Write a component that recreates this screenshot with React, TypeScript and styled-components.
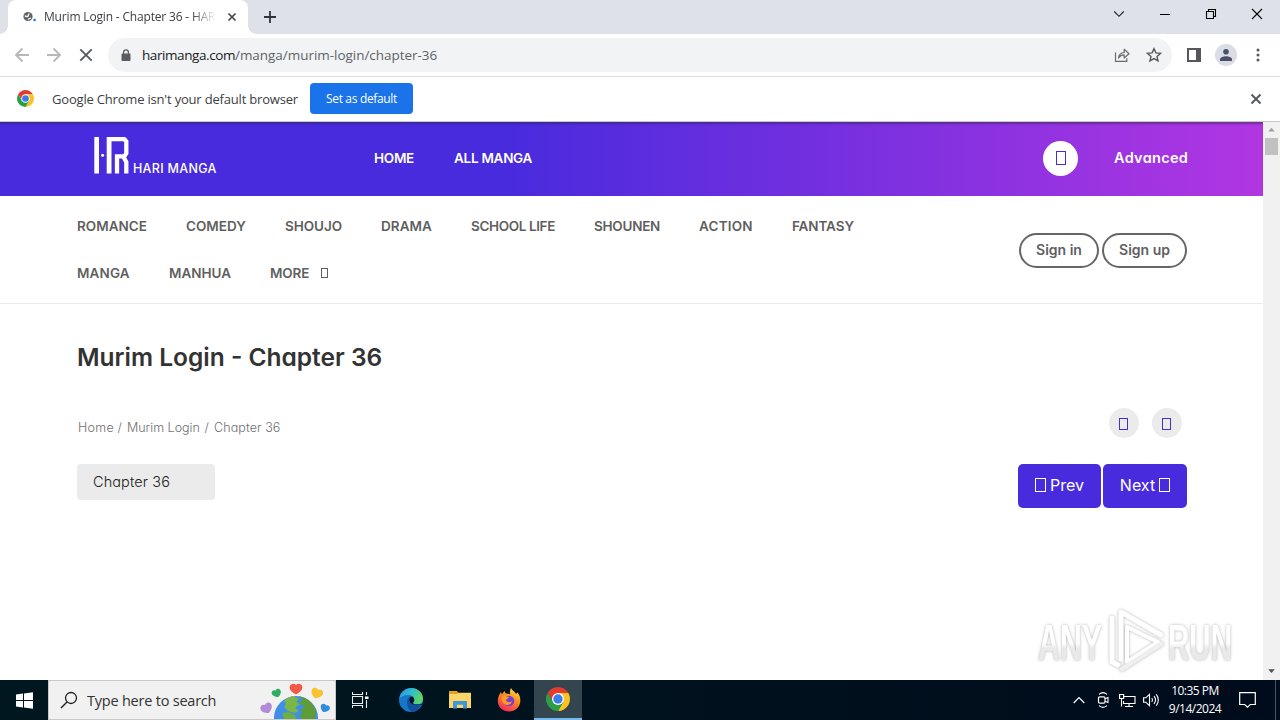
import styled, { createGlobalStyle } from "styled-components"

const categories = [
  [
    { label: "ROMANCE", spacing: 0, width: 70 },
    { label: "COMEDY", spacing: 0, width: 60 },
    { label: "SHOUJO", spacing: -0.05, width: 57 },
    { label: "DRAMA", spacing: 0.05, width: 51 },
    { label: "SCHOOL LIFE", spacing: -0.37, width: 84 },
    { label: "SHOUNEN", spacing: -0.25, width: 66 },
    { label: "ACTION", spacing: 0.2, width: 54 },
    { label: "FANTASY", spacing: -0.1, width: 62 },
  ],
  [
    { label: "MANGA", spacing: 0.15, width: 53 },
    { label: "MANHUA", spacing: 0, width: 62 },
    { label: "MORE", spacing: -0.15, width: 39 },
  ],
]

export default function App() {
  return (
    <Screen>
      <GlobalStyle />
      <TabStrip />
      <Toolbar />
      <InfoBar />
      <Viewport>
        <Page>
          <SiteHeader />
          <SubNav />
          <Chapter />
        </Page>
        <Scrollbar />
        <Watermark />
      </Viewport>
      <Taskbar />
    </Screen>
  )
}

function TabStrip() {
  return (
    <Strip>
      <Tab>
        <Favicon viewBox="0 0 14 12">
          <circle cx="5" cy="5.5" r="4.6" fill="#5f6368" />
          <path d="M1.800 5c1.400 0 2 .8 3 .4S5 3 6.500 2.600M5.200 8.800c0-1.400 1.600-1.600 2.600-1.800" stroke="#fff" strokeWidth="1.300" fill="none" />
          <circle cx="11.6" cy="9" r="1.3" fill="#1a73e8" />
        </Favicon>
        <TabTitle>Murim Login - Chapter 36 - HARI</TabTitle>
        <TabClose viewBox="0 0 10 10">
          <path d="M1.5 1.5l7 7M8.5 1.5l-7 7" stroke="#45494d" strokeWidth="1.7" />
        </TabClose>
      </Tab>
      <NewTab viewBox="0 0 14 14">
        <path d="M7 1v12M1 7h12" stroke="#303438" strokeWidth="1.8" />
      </NewTab>
      <WindowButtons>
        <WindowButton>
          <svg width="12" height="12" viewBox="0 0 12 12">
            <path d="M1.2 3.5L6 8.3l4.8-4.8" fill="none" stroke="#222" strokeWidth="1.1" />
          </svg>
        </WindowButton>
        <WindowButton>
          <svg width="12" height="12" viewBox="0 0 12 12">
            <path d="M1 6.5h10" stroke="#000" />
          </svg>
        </WindowButton>
        <WindowButton>
          <svg width="12" height="12" viewBox="0 0 12 12">
            <path d="M1.5 3.5h7v7h-7zM3.5 3.5v-2h7v7h-2" fill="none" stroke="#000" strokeWidth="1.1" />
          </svg>
        </WindowButton>
        <WindowButton>
          <svg width="12" height="12" viewBox="0 0 12 12">
            <path d="M1 1l10 10M11 1L1 11" stroke="#000" strokeWidth="1.1" />
          </svg>
        </WindowButton>
      </WindowButtons>
    </Strip>
  )
}

function Toolbar() {
  return (
    <Bar>
      <ToolButton>
        <svg width="16" height="16" viewBox="0 0 16 16">
          <path d="M15 8H2.500M8.500 1.500L2 8l6.500 6.500" fill="none" stroke="#b6b8bb" strokeWidth="1.900" />
        </svg>
      </ToolButton>
      <ToolButton>
        <svg width="16" height="16" viewBox="0 0 16 16">
          <path d="M1 8h12.500M7.500 1.500L14 8l-6.500 6.500" fill="none" stroke="#b6b8bb" strokeWidth="1.900" />
        </svg>
      </ToolButton>
      <ToolButton>
        <svg width="14" height="14" viewBox="0 0 14 14">
          <path d="M1.300 1.300l11.400 11.400M12.700 1.300L1.300 12.700" stroke="#54585c" strokeWidth="1.800" />
        </svg>
      </ToolButton>
      <Omnibox>
        <Lock viewBox="0 0 10 13">
          <rect x="0.500" y="4.500" width="9" height="7.500" rx="1" fill="#5a5e62" />
          <path d="M2.600 5V3.300a2.400 2.400 0 0 1 4.800 0V5" fill="none" stroke="#5a5e62" strokeWidth="1.300" />
        </Lock>
        <Domain>harimanga.com</Domain>
        <UrlPath>/manga/murim-login/chapter-36</UrlPath>
        <OmniActions>
          <ToolButton>
            <svg width="16" height="16" viewBox="0 0 16 16">
              <path d="M1.500 5.500v8.800h11.300v-3" fill="none" stroke="#6a6e72" strokeWidth="1.200" />
              <path d="M4.500 11c.4-3.500 2.300-5.300 5.700-5.500V2.300l4.800 4.400-4.800 4.300V7.900C7.600 7.900 5.900 8.800 4.500 11z" fill="none" stroke="#6a6e72" strokeWidth="1.200" strokeLinejoin="round" />
            </svg>
          </ToolButton>
          <ToolButton>
            <svg width="16" height="16" viewBox="0 0 16 16">
              <path d="M8 1.700l1.900 4.200 4.500.5-3.400 3 1 4.500L8 11.600l-4 2.300 1-4.500-3.400-3 4.500-.5z" fill="none" stroke="#54585c" strokeWidth="1.400" />
            </svg>
          </ToolButton>
        </OmniActions>
      </Omnibox>
      <ToolButton>
        <svg width="14" height="14" viewBox="0 0 14 14">
          <path d="M0 0h14v14H0zM2 2v10h7V2z" fill="#54585c" fillRule="evenodd" />
        </svg>
      </ToolButton>
      <ToolButton>
        <Avatar>
          <svg width="12" height="12" viewBox="0 0 12 12">
            <circle cx="6" cy="2.800" r="2.800" fill="#4a5068" />
            <path d="M0 12v-1.600C0 8.200 3.500 7.300 6 7.300s6 .9 6 3.100V12z" fill="#4a5068" />
          </svg>
        </Avatar>
      </ToolButton>
      <ToolButton>
        <svg width="4" height="14" viewBox="0 0 4 14">
          <circle cx="2" cy="2" r="1.500" fill="#54585c" />
          <circle cx="2" cy="7" r="1.500" fill="#54585c" />
          <circle cx="2" cy="12" r="1.500" fill="#54585c" />
        </svg>
      </ToolButton>
    </Bar>
  )
}

function ChromeLogo({ size }: { size: number }) {
  return (
    <svg width={size} height={size} viewBox="0 0 24 24">
      <path d="M1.610 6A12 12 0 0 1 22.390 6H12L6.800 15z" fill="#e33b2e" />
      <path d="M22.390 6A12 12 0 0 1 12 24l5.200-9L12 6z" fill="#fcc31e" />
      <path d="M12 24A12 12 0 0 1 1.610 6L6.800 15h10.400z" fill="#2a9f47" />
      <circle cx="12" cy="12" r="6" fill="#fff" />
      <circle cx="12" cy="12" r="4.700" fill="#3b7ded" />
    </svg>
  )
}

function InfoBar() {
  return (
    <Info>
      <ChromeLogo size={17} />
      <InfoText>Google Chrome isn't your default browser</InfoText>
      <DefaultButton>Set as default</DefaultButton>
      <InfoClose viewBox="0 0 12 12">
        <path d="M1.500 1.500l9 9M10.500 1.500l-9 9" stroke="#54585c" strokeWidth="1.900" />
      </InfoClose>
    </Info>
  )
}

function SiteHeader() {
  return (
    <Header>
      <Logo>
        <svg width="36" height="37" viewBox="0 0 36 37">
          <rect x="0.300" y="0" width="4.700" height="36.500" fill="#fff" />
          <circle cx="8.600" cy="18.300" r="1.500" fill="#fff" />
          <rect x="12.700" y="0" width="4.800" height="36.500" fill="#fff" />
          <path d="M17 2.200h13.300l2 2.200v12l-2 3H23v17.100M29.500 20l2.800 5v11.500" fill="none" stroke="#fff" strokeWidth="4.300" />
        </svg>
        <LogoName>HARI MANGA</LogoName>
      </Logo>
      <MainLink>HOME</MainLink>
      <MainLink>ALL MANGA</MainLink>
      <SearchCircle>
        <Tofu $w={10} $h={14} />
      </SearchCircle>
      <Advanced>Advanced</Advanced>
    </Header>
  )
}

function SubNav() {
  return (
    <Sub>
      <div>
        {categories.map((row, i) => (
          <CategoryRow key={i}>
            {row.map((item) => (
              <Category key={item.label} $spacing={item.spacing} $width={item.width}>
                {item.label}
              </Category>
            ))}
            {i === 1 && <MoreArrow $w={7} $h={10} />}
          </CategoryRow>
        ))}
      </div>
      <SignButtons>
        <SignButton $width={80}>Sign in</SignButton>
        <SignButton $width={85}>Sign up</SignButton>
      </SignButtons>
    </Sub>
  )
}

function Chapter() {
  return (
    <Content>
      <Title>Murim Login - Chapter 36</Title>
      <CrumbRow>
        <Crumbs>
          <Crumb $width={35} $spacing={0.3}>Home</Crumb>
          <Crumb $width={5} $spacing={0}>/</Crumb>
          <Crumb $width={73} $spacing={0}>Murim Login</Crumb>
          <Crumb $width={5} $spacing={0}>/</Crumb>
          <Crumb $width={67} $spacing={0.1}>Chapter 36</Crumb>
        </Crumbs>
        <CircleButtons>
          <CircleButton>
            <Tofu $w={9} $h={12} />
          </CircleButton>
          <CircleButton>
            <Tofu $w={9} $h={12} />
          </CircleButton>
        </CircleButtons>
      </CrumbRow>
      <ReaderRow>
        <ChapterSelect>Chapter 36</ChapterSelect>
        <PageButtons>
          <PageButton $width={83}>
            <Tofu $w={11} $h={14} />
            Prev
          </PageButton>
          <PageButton $width={84}>
            Next
            <Tofu $w={11} $h={14} />
          </PageButton>
        </PageButtons>
      </ReaderRow>
    </Content>
  )
}

function Scrollbar() {
  return (
    <ScrollTrack>
      <ScrollArrow viewBox="0 0 17 17">
        <path d="M5 10l3.500-4 3.500 4z" fill="#a0a0a0" />
      </ScrollArrow>
      <ScrollThumb />
      <ScrollArrow viewBox="0 0 17 17">
        <path d="M5 5.500l3.500 4 3.500-4z" fill="#505050" />
      </ScrollArrow>
    </ScrollTrack>
  )
}

function Watermark() {
  return (
    <Mark viewBox="0 0 205 72">
      <defs>
        <linearGradient id="fade" x1="0" y1="0" x2="0" y2="1">
          <stop offset="0.500" stopColor="#fff" />
          <stop offset="0.600" stopColor="#e9e9e9" />
        </linearGradient>
      </defs>
      <MarkText x="3" y="55" textLength="64" lengthAdjust="spacingAndGlyphs" fill="url(#fade)">
        ANY
      </MarkText>
      <MarkText x="133" y="55" textLength="64" lengthAdjust="spacingAndGlyphs" fill="url(#fade)">
        RUN
      </MarkText>
      <g fill="none" stroke="#fff" strokeLinejoin="round" strokeLinecap="round">
        <path d="M77 13v44l6 3" strokeWidth="5" />
        <path d="M86 54V7l40 23" strokeWidth="5" />
        <path d="M92 22l31 15-31 20z" strokeWidth="4" />
        <path d="M87 64l39-25" strokeWidth="5" stroke="#efefef" />
      </g>
    </Mark>
  )
}

function SearchArt() {
  const heart = "M0 5.500C-4 3.800-6.500 1-5.800-2C-5-4.800-1.500-5.300 0-3.200C1.500-5.300 5-4.800 5.800-2C6.500 1 4 3.800 0 5.500z"
  return (
    <Art viewBox="0 0 76 38">
      <circle cx="37" cy="37" r="22" fill="#3f8fe8" />
      <path d="M25 20c3-3 6-4.500 10-5l5 3-3 3 4 2-5 4 4 3-4 2-7-2-4-4 2-3z" fill="#7ab648" />
      <path d="M39 15c9 1 16 8 18 15l-1 8H43l-3-4 4-2-3-3 5-3-6-4 4-4z" fill="#5f9c35" />
      <path d="M23 32l7-1 6 3 1 4H25z" fill="#6fae42" />
      <path transform="translate(7.500 27) rotate(-25)" d={heart} fill="#b18bd8" />
      <path transform="translate(17.500 12) rotate(-20) scale(.8)" d={heart} fill="#2fae62" />
      <path transform="translate(37 7.500) scale(1.080)" d={heart} fill="#ef5a49" />
      <path transform="translate(58 12) rotate(20)" d={heart} fill="#f9c22e" />
      <path transform="translate(66 27) rotate(25) scale(.8)" d={heart} fill="#2f8be0" />
    </Art>
  )
}

function Taskbar() {
  return (
    <Tasks>
      <TaskCell>
        <svg width="17" height="17" viewBox="0 0 17 17">
          <path d="M0 2.600l7-1V8H0zM8 1.500L17 .2V8H8zM0 9h7v6.400l-7-1zM8 9h9v7.800l-9-1.300z" fill="#fff" />
        </svg>
      </TaskCell>
      <SearchBox>
        <svg width="18" height="18" viewBox="0 0 18 18">
          <circle cx="11" cy="7" r="5.500" fill="none" stroke="#222" strokeWidth="1.300" />
          <path d="M7 11l-6 6" stroke="#222" strokeWidth="1.400" />
        </svg>
        <SearchText>Type here to search</SearchText>
        <SearchArt />
      </SearchBox>
      <TaskCell>
        <svg width="17" height="16" viewBox="0 0 17 16">
          <path d="M.5 0v2.500h10V0M.5 16v-2.500h10V16M.5 4.500h10v7H.5zM14.500 0v3M14.500 8v8" fill="none" stroke="#e8ecee" strokeWidth="1.100" />
          <rect x="13" y="4.500" width="3.500" height="2.500" fill="#fff" />
        </svg>
      </TaskCell>
      <Apps>
        <TaskCell>
          <svg width="24" height="24" viewBox="0 0 24 24">
            <defs>
              <linearGradient id="edgeTop" x1="0" y1="0" x2="1" y2="0.300">
                <stop offset="0" stopColor="#2494dc" />
                <stop offset="0.500" stopColor="#2fb9d4" />
                <stop offset="1" stopColor="#5bd667" />
              </linearGradient>
            </defs>
            <circle cx="12" cy="12" r="12" fill="#1676c8" />
            <path d="M.4 10.500C1.500 4 6.500 0 12.300 0 19 0 24 5 24 10.700c0 3.600-2.700 5.800-6 5.800-2.500 0-4-.8-4-1.600 0-.6 1.200-1.300 1.200-3.200 0-2.600-2.700-4.600-6.200-4.600-4 0-7 2-8.600 3.400z" fill="url(#edgeTop)" />
            <path d="M8 13.500c0-3 2-5 4.500-5 1.700.6 2.700 1.800 2.700 3.300 0 1.600-1.200 2.400-1.200 3.100 0 1 1.700 1.700 4 1.700 1.900 0 3.200-.5 4.200-1.200-1.300 4.700-4.700 7.600-9.200 8.500C9.900 22.600 8 18 8 13.500z" fill="#124f9c" />
            <path d="M14 14.900c0-.6 1.200-1.300 1.200-3.200 0-1.400-.9-2.500-2.200-3.300-1.800.5-2.700 2.200-2.500 3.800.3 2.300 2.200 4.300 7 4.800H24v-1.500c-1.500 1-3.500 1.500-6 1.100-2.500 0-4-.8-4-1.700z" fill="#02151f" />
          </svg>
        </TaskCell>
        <TaskCell>
          <svg width="22" height="18" viewBox="0 0 22 18">
            <path d="M0 0h8l1.500 2H22v5H0z" fill="#e8a01c" />
            <path d="M0 3h8l1.500-1.300H22V17H0z" fill="#fbd56a" />
            <path d="M4 17.500V10h14v7.500h-4v-3.800H8v3.800z" fill="#3d97d8" />
          </svg>
        </TaskCell>
        <TaskCell>
          <svg width="24" height="24" viewBox="0 0 24 24">
            <defs>
              <linearGradient id="fox" x1="0.800" y1="0" x2="0.300" y2="1">
                <stop offset="0" stopColor="#ffe14a" />
                <stop offset="0.450" stopColor="#ff8a1e" />
                <stop offset="1" stopColor="#f5265f" />
              </linearGradient>
            </defs>
            <path d="M14 0c1 2.500 4 3.500 5 6l1.500-1.500C22.500 7 23.500 9.500 23.300 13c-.3 6-5 10.500-11.300 10.500S.8 19 .8 13C.8 9.500 2 6.500 4 4l.8 2.500L7.500 3l1 2.500c2 0 3.500.3 4.700 1C12.700 4.500 12.800 2 14 0z" fill="url(#fox)" />
            <circle cx="12" cy="13" r="5.300" fill="#7a3fd0" />
            <path d="M4.500 9c3-2 5-.5 7.500 0-.5 1.800-2.500 1.500-3 3 .8 2.500 4 2.800 6 1.300-.5 4-7 5-9 1.500C4.800 12.500 4.200 11 4.500 9z" fill="#ff9a22" />
          </svg>
        </TaskCell>
        <ActiveCell>
          <ChromeLogo size={24} />
        </ActiveCell>
      </Apps>
      <Tray>
        <TrayCell>
          <svg width="12" height="8" viewBox="0 0 12 8">
            <path d="M.7 7L6 1.500 11.300 7" fill="none" stroke="#fff" strokeWidth="1.200" />
          </svg>
        </TrayCell>
        <TrayCell>
          <svg width="14" height="16" viewBox="0 0 14 16">
            <path d="M3 2.300c2.300-1.900 5.700-1.900 8 0M3 13.700c2.300 1.900 5.700 1.900 8 0M9 6.800l3-1.300v5l-3-1.300" fill="none" stroke="#fff" strokeWidth="1.100" />
            <rect x="2.500" y="4.800" width="6.500" height="6.400" rx="1.200" fill="none" stroke="#fff" strokeWidth="1.200" />
          </svg>
        </TrayCell>
        <TrayCell>
          <svg width="17" height="15" viewBox="0 0 17 15">
            <path d="M5 3.500h11v7H4.500V8M10 10.500v3M6 13.500h8M2.500 5.500v8" fill="none" stroke="#fff" strokeWidth="1.100" />
            <path d="M.6 1.500h4v4h-4z" fill="none" stroke="#fff" strokeWidth="1.200" />
          </svg>
        </TrayCell>
        <TrayCell>
          <svg width="17" height="14" viewBox="0 0 17 14">
            <path d="M.6 4.800h2.200L6.500 1.300v11.400L2.800 9.200H.6zM8.800 5c.9 1.200.9 2.800 0 4M11 3.200c1.800 2.200 1.800 5.400 0 7.600M13.200 1.300c2.800 3.300 2.800 8.100 0 11.400" fill="none" stroke="#fff" strokeWidth="1.100" />
          </svg>
        </TrayCell>
        <Clock>
          <span>10:35 PM</span>
          <span>9/14/2024</span>
        </Clock>
        <NoticeCell>
          <svg width="17" height="16" viewBox="0 0 17 16">
            <path d="M.7.700h15.600v11.800h-5L8.500 15.200l-2.800-2.700h-5z" fill="none" stroke="#fff" strokeWidth="1.200" />
          </svg>
        </NoticeCell>
        <DesktopEdge />
      </Tray>
    </Tasks>
  )
}

const GlobalStyle = createGlobalStyle`
  * {
    box-sizing: border-box;
  }
  body {
    margin: 0;
    overflow: hidden;
  }
  svg {
    display: block;
    flex-shrink: 0;
  }
  button {
    border: none;
    padding: 0;
    font: inherit;
  }
`
const Screen = styled.div`
  display: flex;
  flex-direction: column;
  width: 1280px;
  height: 720px;
  overflow: hidden;
  background: #fff;
  font-family: "Open Sans", "Noto Sans", sans-serif;
`
const Strip = styled.div`
  display: flex;
  height: 34px;
  background: #dee1e8;
`
const Tab = styled.div`
  position: relative;
  display: flex;
  align-items: center;
  width: 240px;
  height: 34px;
  margin-left: 8px;
  padding-left: 15px;
  border-radius: 8px 8px 0 0;
  background: #fff;
  &::before,
  &::after {
    content: "";
    position: absolute;
    bottom: 0;
    width: 8px;
    height: 8px;
  }
  &::before {
    left: -8px;
    background: radial-gradient(circle at 0 0, transparent 7.5px, #fff 8px);
  }
  &::after {
    right: -8px;
    background: radial-gradient(circle at 100% 0, transparent 7.5px, #fff 8px);
  }
`
const Favicon = styled.svg`
  width: 14px;
  height: 12px;
`
const TabTitle = styled.div`
  width: 171px;
  margin-left: 7px;
  padding-bottom: 1px;
  overflow: hidden;
  white-space: nowrap;
  font-size: 12px;
  letter-spacing: -0.17px;
  color: #3c4043;
  mask-image: linear-gradient(90deg, #000 148px, transparent 172px);
`
const TabClose = styled.svg`
  width: 10px;
  height: 10px;
  margin-left: 12px;
`
const NewTab = styled.svg`
  width: 14px;
  height: 14px;
  margin: 10px 0 0 15px;
`
const WindowButtons = styled.div`
  display: flex;
  margin-left: auto;
`
const WindowButton = styled.div`
  display: flex;
  align-items: center;
  justify-content: center;
  width: 46px;
  height: 28px;
`
const Bar = styled.div`
  display: flex;
  align-items: center;
  height: 43px;
  padding: 0 6px;
  border-bottom: 1px solid #dcdcde;
`
const ToolButton = styled.div`
  display: flex;
  align-items: center;
  justify-content: center;
  width: 32px;
  height: 32px;
  flex-shrink: 0;
`
const Omnibox = styled.div`
  display: flex;
  align-items: center;
  flex: 1;
  height: 34px;
  margin: 0 6px;
  padding: 0 2px 0 13px;
  border-radius: 17px;
  background: #f1f3f4;
  font-size: 13.5px;
`
const Lock = styled.svg`
  width: 10px;
  height: 13px;
`
const Domain = styled.span`
  width: 93px;
  margin-left: 11px;
  letter-spacing: -0.42px;
  color: #202124;
`
const UrlPath = styled.span`
  letter-spacing: -0.04px;
  color: #5f6368;
`
const OmniActions = styled.div`
  display: flex;
  margin-left: auto;
`
const Avatar = styled.div`
  display: flex;
  align-items: center;
  justify-content: center;
  width: 22px;
  height: 22px;
  border-radius: 50%;
  background: #dadce6;
`
const Info = styled.div`
  display: flex;
  align-items: center;
  height: 45px;
  padding: 0 18px 1px 17px;
  border-bottom: 1px solid #c9c9cb;
`
const InfoText = styled.span`
  width: 258px;
  margin-left: 18px;
  font-size: 13px;
  letter-spacing: -0.19px;
  white-space: nowrap;
  color: #3c4043;
`
const DefaultButton = styled.button`
  width: 103px;
  height: 31px;
  border-radius: 4px;
  background: #1a73e8;
  font-size: 12px;
  letter-spacing: -0.33px;
  color: #fff;
`
const InfoClose = styled.svg`
  width: 12px;
  height: 12px;
  margin-left: auto;
`
const Viewport = styled.div`
  position: relative;
  display: flex;
  height: 558px;
`
const Page = styled.div`
  width: 1263px;
  font-family: Inter, sans-serif;
  font-feature-settings: "cv11";
`
const Header = styled.div`
  display: flex;
  align-items: center;
  height: 74px;
  padding: 0 75px 2px 94px;
  background: linear-gradient(90deg, #482bdd 40%, #b136e2 100%);
  box-shadow: inset 0 3px 2px -1px rgba(40, 40, 60, 0.45);
  color: #fff;
`
const Logo = styled.div`
  display: flex;
  align-items: flex-end;
  width: 280px;
  padding-bottom: 5px;
`
const LogoName = styled.span`
  margin-left: 3px;
  font-size: 12.5px;
  font-weight: 500;
  line-height: 11px;
  letter-spacing: 0.3px;
  white-space: nowrap;
`
const MainLink = styled.a`
  margin-right: 40px;
  font-size: 13.5px;
  font-weight: 600;
  letter-spacing: -0.27px;
`
const SearchCircle = styled.div`
  display: flex;
  align-items: center;
  justify-content: center;
  width: 35px;
  height: 35px;
  margin-left: auto;
  border-radius: 50%;
  background: #fff;
  color: #482bdd;
`
const Advanced = styled.a`
  width: 74px;
  margin-left: 36px;
  padding-bottom: 1px;
  font-size: 14.5px;
  font-weight: 600;
  letter-spacing: 0.3px;
`
/* empty box shown in place of a missing icon glyph */
const Tofu = styled.i<{ $w: number; $h: number }>`
  display: inline-block;
  flex-shrink: 0;
  width: ${(props) => props.$w}px;
  height: ${(props) => props.$h}px;
  border: 1px solid currentColor;
`
const Sub = styled.div`
  display: flex;
  justify-content: space-between;
  height: 108px;
  padding: 6px 76px 0 77px;
  border-bottom: 1px solid #ebebeb;
  color: #5f5f5f;
`
const CategoryRow = styled.div`
  display: flex;
  align-items: center;
  gap: 39px;
  height: 47px;
`
const Category = styled.a<{ $spacing: number; $width: number }>`
  width: ${(props) => props.$width}px;
  font-size: 13.5px;
  font-weight: 600;
  letter-spacing: ${(props) => props.$spacing}px;
  white-space: nowrap;
`
const MoreArrow = styled(Tofu)`
  margin-left: -27px;
`
const SignButtons = styled.div`
  display: flex;
  gap: 3px;
  margin-top: 31px;
`
const SignButton = styled.button<{ $width: number }>`
  width: ${(props) => props.$width}px;
  height: 35px;
  padding-bottom: 2px;
  border: 2px solid #666;
  border-radius: 18px;
  background: transparent;
  font-size: 14px;
  font-weight: 600;
  color: #5f5f5f;
`
const Content = styled.div`
  padding: 37px 76px 0 77px;
`
const Title = styled.h1`
  margin: 0;
  font-size: 24.5px;
  font-weight: 600;
  line-height: 32px;
  color: #333;
`
const CrumbRow = styled.div`
  display: flex;
  align-items: center;
  justify-content: space-between;
  height: 30px;
  margin-top: 35px;
`
const Crumbs = styled.div`
  display: flex;
  gap: 4.5px;
  margin-top: 8px;
  padding-left: 1px;
`
const Crumb = styled.span<{ $width: number; $spacing: number }>`
  width: ${(props) => props.$width}px;
  font-size: 12.5px;
  font-weight: 300;
  letter-spacing: ${(props) => props.$spacing}px;
  white-space: nowrap;
  color: #6f6f6f;
`
const CircleButtons = styled.div`
  display: flex;
  gap: 13px;
  margin-right: 5px;
`
const CircleButton = styled.div`
  display: flex;
  align-items: center;
  justify-content: center;
  width: 30px;
  height: 30px;
  padding: 2px 1px 0 0;
  border-radius: 50%;
  background: #ebebeb;
  color: #482bdd;
`
const ReaderRow = styled.div`
  display: flex;
  justify-content: space-between;
  margin-top: 26px;
`
const ChapterSelect = styled.div`
  width: 138px;
  height: 36px;
  padding-left: 16px;
  border-radius: 4px;
  background: #ebebeb;
  font-size: 14.5px;
  font-weight: 300;
  line-height: 36px;
  letter-spacing: 0.1px;
  color: #222;
`
const PageButtons = styled.div`
  display: flex;
  gap: 2px;
`
const PageButton = styled.button<{ $width: number }>`
  display: flex;
  align-items: center;
  justify-content: center;
  gap: 4px;
  width: ${(props) => props.$width}px;
  height: 44px;
  padding-bottom: 2px;
  border-radius: 5px;
  background: #482bdd;
  font-size: 16px;
  color: #fff;
`
const ScrollTrack = styled.div`
  display: flex;
  flex-direction: column;
  align-items: center;
  width: 17px;
  background: #f1f1f1;
`
const ScrollArrow = styled.svg`
  width: 17px;
  height: 16px;
`
const ScrollThumb = styled.div`
  width: 13px;
  height: 17px;
  margin-bottom: auto;
  background: #c1c1c1;
`
const Mark = styled.svg`
  position: absolute;
  right: 40px;
  bottom: 3px;
  width: 205px;
  height: 72px;
  overflow: visible;
  filter: drop-shadow(0 0 1.5px rgba(0, 0, 0, 0.3));
`
const MarkText = styled.text`
  font: 700 50px "Liberation Sans Narrow", "Liberation Sans", sans-serif;
`
const Tasks = styled.div`
  display: flex;
  height: 40px;
  background: linear-gradient(90deg, #001720, #00121d 50%, #000b1c);
`
const TaskCell = styled.div`
  display: flex;
  align-items: center;
  justify-content: center;
  width: 48px;
  height: 40px;
`
const ActiveCell = styled(TaskCell)`
  border-bottom: 2px solid #76b9ed;
  background: #33454e;
`
const SearchBox = styled.div`
  display: flex;
  align-items: center;
  width: 288px;
  height: 40px;
  padding-left: 11px;
  border: 1px solid #c8c8c8;
  background: #f1f1f1;
`
const SearchText = styled.span`
  width: 164px;
  margin-left: 9px;
  font-size: 14.5px;
  letter-spacing: -0.22px;
  white-space: nowrap;
  color: #333;
`
const Art = styled.svg`
  width: 76px;
  height: 38px;
  margin-left: 9px;
`
const Apps = styled.div`
  display: flex;
  gap: 1px;
  margin-left: 3px;
`
const Tray = styled.div`
  display: flex;
  align-items: center;
  width: 213px;
  margin-left: auto;
`
const TrayCell = styled.div`
  display: flex;
  align-items: center;
  justify-content: center;
  width: 24px;
`
const Clock = styled.div`
  display: flex;
  flex-direction: column;
  align-items: center;
  width: 64px;
  font-size: 12px;
  line-height: 18px;
  letter-spacing: -0.5px;
  color: #fff;
`
const NoticeCell = styled.div`
  display: flex;
  justify-content: center;
  width: 40px;
`
const DesktopEdge = styled.div`
  width: 1px;
  height: 40px;
  margin-left: 8px;
  background: #4a5364;
`
